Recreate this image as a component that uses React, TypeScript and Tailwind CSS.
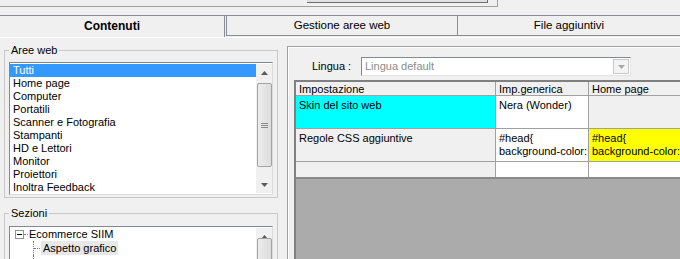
import React from 'react'

const areas = [
  'Tutti',
  'Home page',
  'Computer',
  'Portatili',
  'Scanner e Fotografia',
  'Stampanti',
  'HD e Lettori',
  'Monitor',
  'Proiettori',
  'Inoltra Feedback',
]

const Arrow: React.FC<{ up?: boolean; color?: string }> = ({ up, color = '#5b5b5b' }) => (
  <svg width="7" height="4" viewBox="0 0 7 4">
    <polygon points={up ? '3.5,0 7,4 0,4' : '0,0 7,0 3.5,4'} fill={color} />
  </svg>
)

const ScrollBar: React.FC<{ thumbTop: number; thumbH: number; full?: boolean }> = ({
  thumbTop,
  thumbH,
  full = true,
}) => (
  <div className="flex h-full w-[16px] flex-col bg-[#f0f0f0]">
    <div className="flex h-[17px] shrink-0 items-center justify-center">
      <Arrow up />
    </div>
    <div className="flex-1">
      <div
        className="mx-auto flex w-[15px] flex-col items-center justify-center gap-[1px] rounded-[2px] border border-[#a3a3a3] bg-gradient-to-r from-[#ececec] to-[#dcdcdc]"
        style={{ marginTop: thumbTop, height: thumbH }}
      >
        <div className="h-px w-[7px] bg-[#8a8a8a]" />
        <div className="h-px w-[7px] bg-[#8a8a8a]" />
        <div className="h-px w-[7px] bg-[#8a8a8a]" />
      </div>
    </div>
    {full && (
      <div className="flex h-[17px] shrink-0 items-center justify-center">
        <Arrow />
      </div>
    )}
  </div>
)

const Cell: React.FC<{
  w: string
  bg: string
  children?: React.ReactNode
  last?: boolean
  head?: boolean
}> = ({ w, bg, children, last, head }) => (
  <div
    className={`${w} ${bg} ${last ? '' : 'border-r'} ${head ? 'pt-[1px]' : 'pt-[3px]'} overflow-hidden whitespace-nowrap border-[#a0a0a0] pl-[3px] leading-[13px]`}
  >
    {children}
  </div>
)

export default function App() {
  return (
    <div className="h-[259px] w-[680px] overflow-hidden bg-[#f0f0f0] font-['Liberation_Sans',Arial,sans-serif] text-[11px] text-black">
      {/* top strip */}
      <div className="flex h-[15px]">
        <div className="h-[7px] w-[307px] border-b border-[#a0a0a0]" />
        <div className="h-[7px] w-[191px] border-b border-r border-[#a0a0a0]">
          <div className="h-[3px] w-[181px] border-b border-r border-[#6d6d6d] bg-[#e1e1e1]" />
        </div>
      </div>

      {/* tabs */}
      <div className="flex h-[22px] border-t border-[#898c95]">
        <div className="flex w-[225px] items-center justify-center border-r border-[#898c95] pb-[2px] text-[12px] font-bold">
          Contenuti
        </div>
        <div className="ml-[1px] flex h-[20px] w-[232px] items-center justify-center border-b border-l border-r border-[#898c95] text-[11.5px]">
          Gestione aree web
        </div>
        <div className="flex h-[20px] flex-1 items-center justify-center border-b border-[#898c95] text-[11.5px]">
          File aggiuntivi
        </div>
      </div>

      {/* body */}
      <div className="flex border-t border-white">
        {/* left column */}
        <div className="ml-[4px] flex w-[275px] flex-col">
          <fieldset className="mt-[6px] border border-[#c9c9c9] px-[4px] pb-[2px]">
            <legend className="ml-0 px-[2px] leading-[13px]">Aree web</legend>
            <div className="mt-[5px] flex h-[133px] w-[264px] border-b border-l border-r border-t border-b-[#dcdcdc] border-l-[#828790] border-r-[#dcdcdc] border-t-[#828790] bg-white">
              <div className="flex-1 pt-px">
                {areas.map((a, i) => (
                  <div
                    key={a}
                    className={`h-[13px] pl-[3px] leading-[13px] ${i === 0 ? 'bg-[#3399ff] text-white' : ''}`}
                  >
                    {a}
                  </div>
                ))}
              </div>
              <div className="pt-px pb-px">
                <ScrollBar thumbTop={2} thumbH={84} />
              </div>
            </div>
          </fieldset>

          <fieldset className="mt-[9px] h-[80px] border border-[#c9c9c9] px-[4px]">
            <legend className="ml-0 px-[2px] leading-[13px]">Sezioni</legend>
            <div className="mt-[6px] flex h-[60px] w-[264px] border-l border-r border-t border-l-[#828790] border-r-[#dcdcdc] border-t-[#828790] bg-white">
              <div className="flex-1 pt-px">
                <div className="flex h-[13px] items-center pl-[5px]">
                  <div className="flex h-[9px] w-[9px] items-center justify-center border border-[#919191]">
                    <div className="h-px w-[5px] bg-black" />
                  </div>
                  <div className="mr-[1px] w-[4px] border-t border-dotted border-[#7a7a7a]" />
                  <span className="leading-[13px]">Ecommerce SIIM</span>
                </div>
                <div className="flex h-[14px] items-center pl-[23px]">
                  <div className="mr-[1px] h-[14px] w-[7px] border-l border-dotted border-[#7a7a7a]">
                    <div className="mt-[7px] w-[6px] border-t border-dotted border-[#7a7a7a]" />
                  </div>
                  <span className="bg-[#e8e8e8] px-[2px] leading-[14px]">Aspetto grafico</span>
                </div>
                <div className="ml-[23px] h-[20px] border-l border-dotted border-[#7a7a7a]" />
              </div>
              <div className="pt-px">
                <ScrollBar thumbTop={-7} thumbH={60} full={false} />
              </div>
            </div>
          </fieldset>
        </div>

        {/* right panel */}
        <div className="ml-[9px] mt-[8px] flex h-[214px] flex-1 flex-col border-l border-t border-[#a0a0a0]">
          <div className="flex h-full flex-col border-l border-t border-white">
            <div className="mt-[9px] flex h-[19px] items-center pl-[23px]">
              <span className="w-[49px]">Lingua :</span>
              <div className="flex h-[19px] w-[270px] border-b border-l border-r border-t border-b-[#e3e3e3] border-l-[#828790] border-r-[#e3e3e3] border-t-[#828790] bg-white">
                <span className="flex-1 pl-[3px] leading-[16px] text-[#8c8c8c]">Lingua default</span>
                <div className="m-px flex w-[16px] items-center justify-center border border-[#c8c8c8] bg-[#f4f4f4]">
                  <Arrow color="#a8a8a8" />
                </div>
              </div>
            </div>

            {/* grid */}
            <div className="ml-[5px] mt-[4px] flex flex-1 flex-col border-l-2 border-t-2 border-[#808080] bg-[#ababab]">
              <div className="flex h-[14px] border-b border-[#a0a0a0] bg-[#f0f0f0]">
                <Cell w="w-[200px]" bg="bg-[#f0f0f0]" head>Impostazione</Cell>
                <Cell w="w-[93px]" bg="bg-[#f0f0f0]" head>Imp.generica</Cell>
                <Cell w="flex-1" bg="bg-[#f0f0f0]" head last>Home page</Cell>
              </div>
              <div className="flex h-[33px] border-b border-[#a0a0a0]">
                <Cell w="w-[200px]" bg="bg-[#00ffff]">Skin del sito web</Cell>
                <Cell w="w-[93px]" bg="bg-white">Nera (Wonder)</Cell>
                <Cell w="flex-1" bg="bg-[#f0f0f0]" last />
              </div>
              <div className="flex h-[33px] border-b border-[#a0a0a0]">
                <Cell w="w-[200px]" bg="bg-[#f0f0f0]">Regole CSS aggiuntive</Cell>
                <Cell w="w-[93px]" bg="bg-white">
                  #head{'{'}
                  <br />
                  background-color:
                </Cell>
                <Cell w="flex-1" bg="bg-[#ffff00]" last>
                  #head{'{'}
                  <br />
                  background-color:
                </Cell>
              </div>
              <div className="flex h-[17px] border-b-2 border-[#8a8a8a]">
                <Cell w="w-[200px]" bg="bg-[#f0f0f0]" />
                <Cell w="w-[93px]" bg="bg-white" />
                <Cell w="flex-1" bg="bg-white" last />
              </div>
            </div>
          </div>
        </div>
      </div>
    </div>
  )
}
